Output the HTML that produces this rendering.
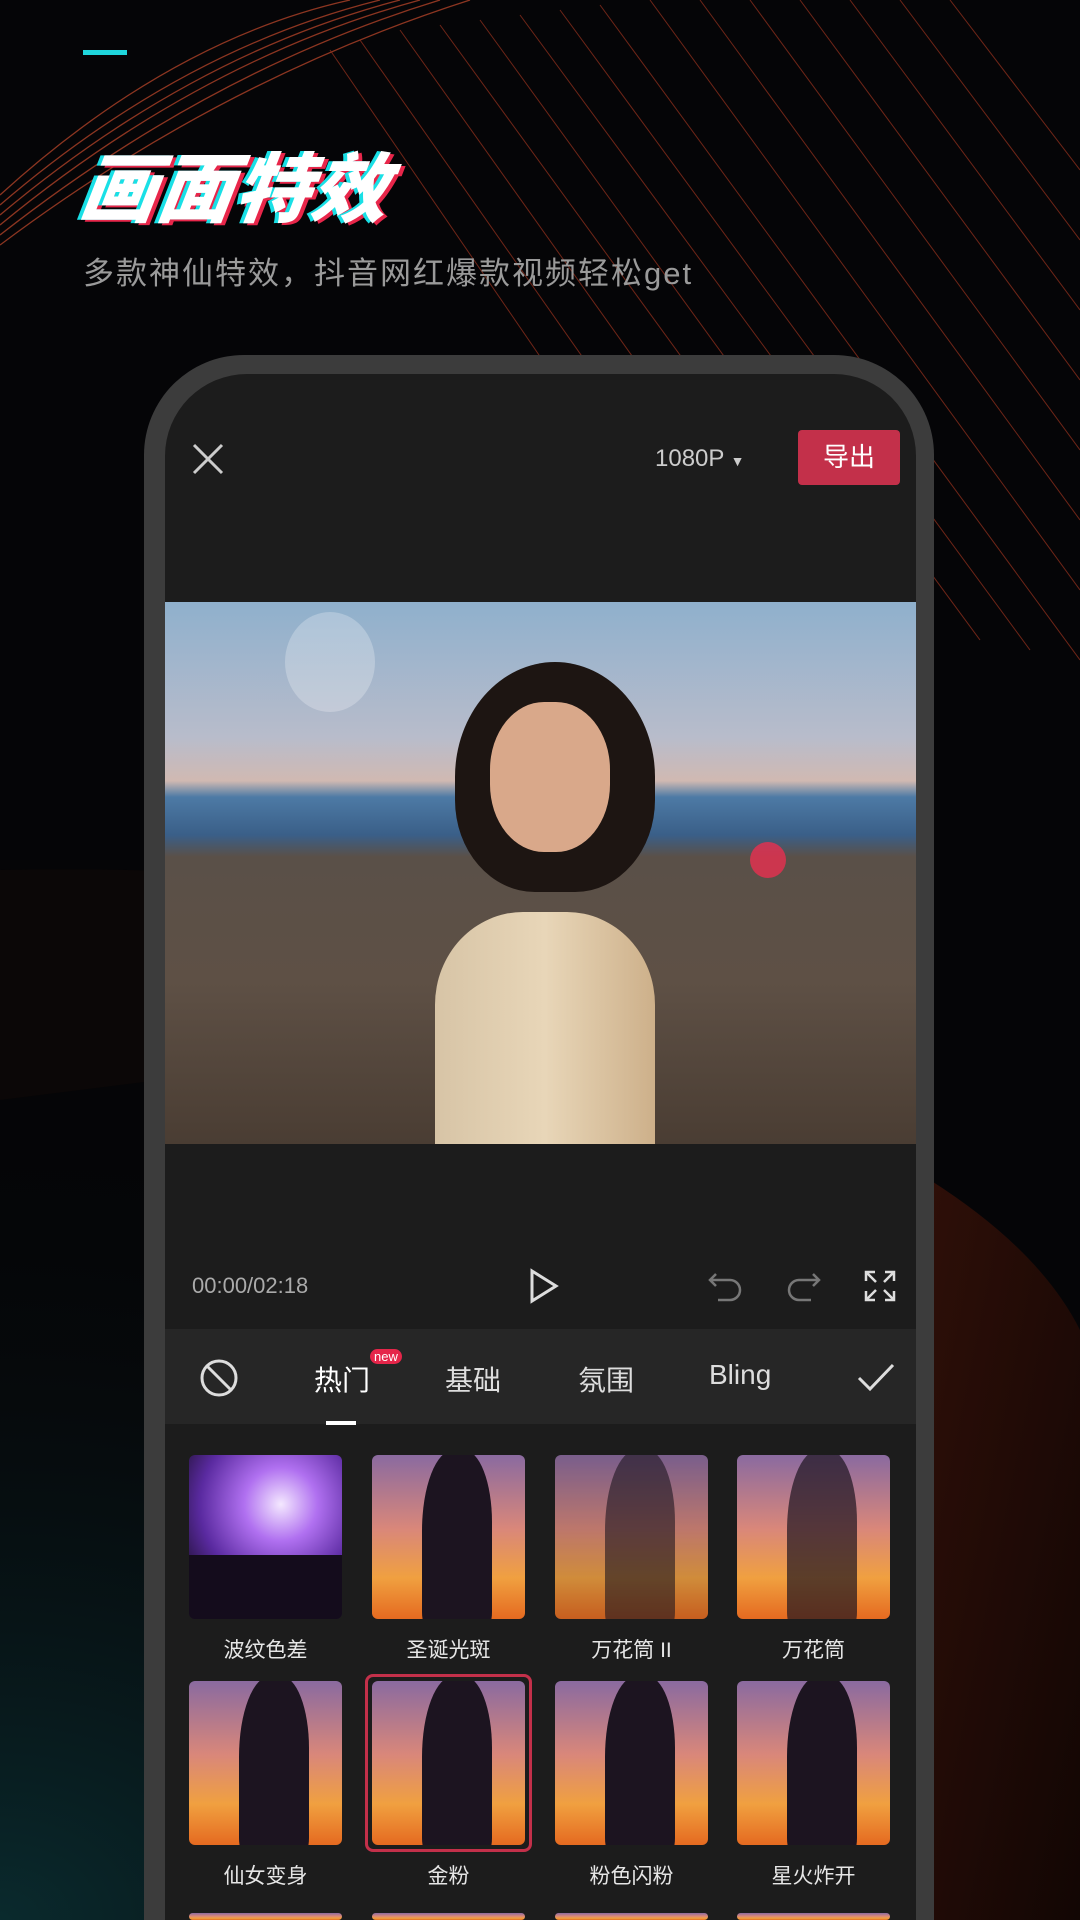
<!DOCTYPE html>
<html><head><meta charset="utf-8"><style>
*{margin:0;padding:0;box-sizing:border-box}
html,body{width:1080px;height:1920px;overflow:hidden;background:#050507}
body{font-family:"Liberation Sans","Noto Sans CJK SC",sans-serif}
#wrap{position:relative;width:1080px;height:1920px;overflow:hidden;background:#050507}
.abs{position:absolute}
.title{left:82px;top:128px;font-size:76px;font-weight:900;color:#fff;font-style:italic;letter-spacing:1px;text-shadow:-4px 0 #19e0e6,4px 2px #e8264a;transform:skewX(-8deg)}
.sub{left:83px;top:248px;font-size:31px;color:#9a9a9a;letter-spacing:2px}
.phone{left:144px;top:355px;width:790px;height:1565px;background:#3c3c3c;border-radius:100px 100px 0 0}
.screen{left:165px;top:374px;width:751px;height:1546px;background:#1c1c1c;border-radius:82px 82px 0 0;overflow:hidden}
.lbl{font-size:21px;color:#e6e6e6;text-align:center;width:153px}
.th{width:153px;height:164px;border-radius:6px;overflow:hidden;background:linear-gradient(180deg,#8a6aa0 0%,#d9877a 45%,#f0a040 75%,#e56a20 100%)}
.sil{position:absolute;left:50px;top:-5px;width:70px;height:180px;background:#1c1420;border-radius:45% 40% 10% 10%}
</style></head><body><div id="wrap">
<svg class="abs" style="left:0;top:0" width="1080" height="1920">
<defs><radialGradient id="g1" cx="0" cy="1" r="1"><stop offset="0" stop-color="#0c3a3e" stop-opacity=".7"/><stop offset="1" stop-color="#050507" stop-opacity="0"/></radialGradient>
<linearGradient id="g2" x1="0" y1="0" x2="1" y2="1"><stop offset="0" stop-color="#2e0f08"/><stop offset="1" stop-color="#120604"/></linearGradient></defs>
<path d="M0 870 Q500 860 800 1000 L0 1100Z" fill="#0c0807" opacity=".8"/>
<rect x="0" y="1100" width="1080" height="820" fill="url(#g1)"/>
<path d="M930 1180 Q1040 1250 1080 1330 L1080 1920 L930 1920Z" fill="url(#g2)"/>
<g stroke="#b9462a" stroke-width="1.3" fill="none" opacity=".75">
<path d="M0 225 Q200 60 420 0"/><path d="M0 215 Q190 55 400 0"/><path d="M0 205 Q180 50 380 0"/><path d="M0 235 Q210 70 440 0"/>
<path d="M0 195 Q170 40 350 0"/><path d="M0 245 Q220 80 470 0"/>
</g>
<g stroke="#8a2e1c" stroke-width="1" fill="none" opacity=".8">
<path d="M330 50 L700 590"/><path d="M360 40 L760 610"/><path d="M400 30 L820 620"/><path d="M440 25 L880 630"/><path d="M480 20 L930 640"/><path d="M520 15 L980 640"/><path d="M560 10 L1030 650"/><path d="M600 5 L1080 660"/><path d="M650 0 L1080 590"/><path d="M700 0 L1080 520"/><path d="M750 0 L1080 450"/><path d="M800 0 L1080 380"/><path d="M850 0 L1080 310"/><path d="M900 0 L1080 240"/><path d="M950 0 L1080 170"/>
</g>
</svg>
<div class="abs" style="left:83px;top:50px;width:44px;height:5px;background:#1fd6dc"></div>
<div class="abs title">画面特效</div>
<div class="abs sub">多款神仙特效，抖音网红爆款视频轻松get</div>
<div class="abs phone"></div>
<div class="abs screen"></div>
<svg class="abs" style="left:190px;top:441px" width="36" height="36"><path d="M4 4L32 32M32 4L4 32" stroke="#ccc" stroke-width="3"/></svg>
<div class="abs" style="left:655px;top:445px;font-size:24px;color:#ccc">1080P <span style="font-size:14px">▼</span></div>
<div class="abs" style="left:798px;top:430px;width:102px;height:55px;background:#c3304a;border-radius:4px;color:#fff;font-size:26px;text-align:center;line-height:55px">导出</div>
<div class="abs" style="left:165px;top:602px;width:751px;height:542px;background:linear-gradient(180deg,#8fb0cc 0%,#b8bccb 25%,#d0b9b2 33%,#4d7aa5 36%,#3a5f88 43%,#5a5048 47%,#5e5045 70%,#4a3d33 100%);overflow:hidden">
<div class="abs" style="left:290px;top:60px;width:200px;height:230px;background:#1d1512;border-radius:50% 50% 40% 40%"></div>
<div class="abs" style="left:325px;top:100px;width:120px;height:150px;background:#d9a88a;border-radius:45%"></div>
<div class="abs" style="left:270px;top:310px;width:220px;height:232px;background:linear-gradient(90deg,#d7c4a6,#e8d6b8,#cdb08a);border-radius:40% 40% 0 0"></div>
<div class="abs" style="left:120px;top:10px;width:90px;height:100px;border-radius:50%;background:rgba(255,255,255,.25)"></div>
<div class="abs" style="left:585px;top:240px;width:36px;height:36px;border-radius:50%;background:#e83050;opacity:.8"></div>
</div>
<div class="abs" style="left:192px;top:1273px;font-size:22px;color:#aaa">00:00/02:18</div>
<svg class="abs" style="left:528px;top:1268px" width="32" height="36"><path d="M4 3L28 18L4 33Z" fill="none" stroke="#ddd" stroke-width="3"/></svg>
<svg class="abs" style="left:708px;top:1270px" width="36" height="32"><path d="M8 4L2 10L8 16M2 10H22a10 10 0 0 1 0 20H10" fill="none" stroke="#777" stroke-width="2.5"/></svg>
<svg class="abs" style="left:785px;top:1270px" width="36" height="32"><path d="M28 4L34 10L28 16M34 10H14a10 10 0 0 0 0 20H26" fill="none" stroke="#777" stroke-width="2.5"/></svg>
<svg class="abs" style="left:864px;top:1270px" width="32" height="32"><path d="M2 11V2H11M2 2L12 12M21 2H30V11M30 2L20 12M2 21V30H11M2 30L12 20M21 30H30V21M30 30L20 20" fill="none" stroke="#ddd" stroke-width="2.5"/></svg>
<div class="abs" style="left:165px;top:1329px;width:751px;height:95px;background:#262626"></div>
<svg class="abs" style="left:199px;top:1358px" width="40" height="40"><circle cx="20" cy="20" r="17" fill="none" stroke="#ddd" stroke-width="3"/><path d="M8 8L32 32" stroke="#ddd" stroke-width="3"/></svg>
<div class="abs" style="left:314px;top:1359px;font-size:28px;color:#fff">热门</div>
<div class="abs" style="left:370px;top:1349px;font-size:13px;color:#fff;background:#e5264a;border-radius:8px;padding:0 4px">new</div>
<div class="abs" style="left:326px;top:1421px;width:30px;height:4px;background:#fff"></div>
<div class="abs" style="left:445px;top:1359px;font-size:28px;color:#ddd">基础</div>
<div class="abs" style="left:578px;top:1359px;font-size:28px;color:#ddd">氛围</div>
<div class="abs" style="left:709px;top:1359px;font-size:28px;color:#ddd">Bling</div>
<svg class="abs" style="left:856px;top:1362px" width="40" height="32"><path d="M3 16L14 27L37 3" fill="none" stroke="#ddd" stroke-width="3"/></svg>

<div class="abs th" style="left:189px;top:1455px;background:radial-gradient(circle at 60% 30%,#f4e8ff,#b070f0 25%,#5a2aa0 55%,#1e1030 80%)"><div class="abs" style="left:0;top:100px;width:153px;height:64px;background:#140c1c"></div></div>
<div class="abs th" style="left:372px;top:1455px"><div class="sil"></div></div>
<div class="abs th" style="left:555px;top:1455px;opacity:.85"><div class="sil" style="opacity:.6"></div></div>
<div class="abs th" style="left:737px;top:1455px"><div class="sil" style="opacity:.7"></div></div>
<div class="abs th" style="left:189px;top:1681px"><div class="sil"></div></div>
<div class="abs" style="left:365px;top:1674px;width:167px;height:178px;border:3px solid #c3304a;border-radius:8px"></div>
<div class="abs th" style="left:372px;top:1681px"><div class="sil"></div></div>
<div class="abs th" style="left:555px;top:1681px"><div class="sil"></div></div>
<div class="abs th" style="left:737px;top:1681px"><div class="sil"></div></div>
<div class="abs th" style="left:189px;top:1913px;height:7px"></div><div class="abs th" style="left:372px;top:1913px;height:7px"></div><div class="abs th" style="left:555px;top:1913px;height:7px"></div><div class="abs th" style="left:737px;top:1913px;height:7px"></div>

<div class="abs lbl" style="left:189px;top:1634px">波纹色差</div>
<div class="abs lbl" style="left:372px;top:1634px">圣诞光斑</div>
<div class="abs lbl" style="left:555px;top:1634px">万花筒 II</div>
<div class="abs lbl" style="left:737px;top:1634px">万花筒</div>
<div class="abs lbl" style="left:189px;top:1860px">仙女变身</div>
<div class="abs lbl" style="left:372px;top:1860px">金粉</div>
<div class="abs lbl" style="left:555px;top:1860px">粉色闪粉</div>
<div class="abs lbl" style="left:737px;top:1860px">星火炸开</div>
</div></body></html>
